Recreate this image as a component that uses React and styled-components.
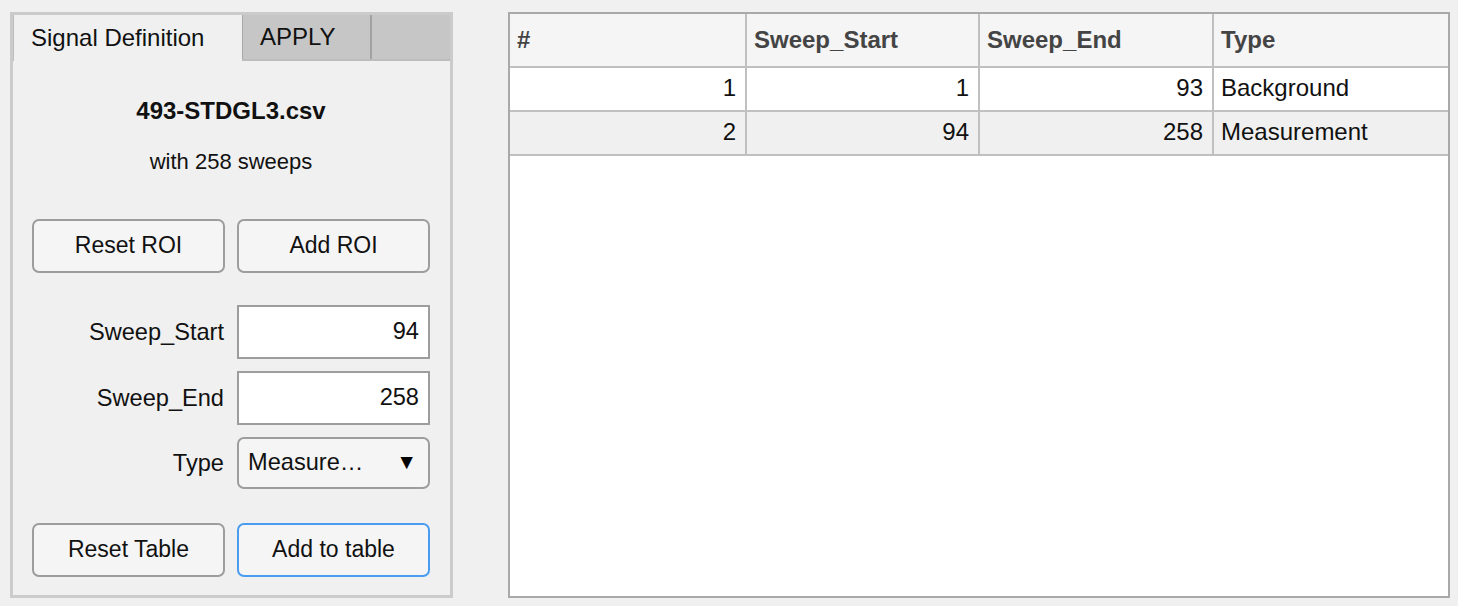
import React from "react";
import styled, { createGlobalStyle } from "styled-components";

const GlobalStyle = createGlobalStyle`
  html, body {
    margin: 0;
    padding: 0;
    background: #f0f0f0;
    font-family: "Liberation Sans", Arial, Helvetica, sans-serif;
    color: #111;
  }
  * {
    box-sizing: border-box;
  }
`;

const Page = styled.div`
  display: flex;
  align-items: flex-start;
  gap: 55px;
  padding: 12px 8px 8px 10px;
  height: 606px;
`;

const Panel = styled.div`
  width: 443px;
  height: 586px;
  border: 3px solid #cbcbcb;
  background: #f0f0f0;
  display: flex;
  flex-direction: column;
`;

const TabBar = styled.div`
  display: flex;
  height: 46px;
  background: #c6c6c6;
  border-bottom: 2px solid #bcbcbc;
`;

const Tab = styled.div`
  display: flex;
  align-items: center;
  width: ${({ width }) => width}px;
  padding: 0 0 1px 17px;
  font-size: 24px;
  color: #111;
  background: ${({ active }) => (active ? "#f0f0f0" : "#c6c6c6")};
  border-left: 1px solid ${({ active }) => (active ? "#bdbdbd" : "#a8a8a8")};
  border-right: ${({ active }) => (active ? "none" : "2px solid #a2a2a2")};
  margin-bottom: ${({ active }) => (active ? "-2px" : "0")};
`;

const Content = styled.div`
  display: flex;
  flex-direction: column;
  align-items: stretch;
  padding: 35px 0 0 19px;
`;

const FileName = styled.div`
  width: 398px;
  text-align: center;
  font-size: 24px;
  font-weight: bold;
  line-height: 30px;
`;

const Subtitle = styled.div`
  width: 398px;
  text-align: center;
  font-size: 22px;
  line-height: 30px;
  margin-top: 21px;
`;

const Grid = styled.div`
  display: grid;
  grid-template-columns: 193px 193px;
  column-gap: 12px;
  row-gap: 12px;
  width: 398px;
  margin-top: ${({ top }) => top}px;
  align-items: center;
`;

const Button = styled.button`
  width: 193px;
  height: 54px;
  font-family: inherit;
  font-size: 23px;
  color: #111;
  background: #f5f5f5;
  border: 2px solid ${({ primary }) => (primary ? "#4a9cf0" : "#9d9d9d")};
  border-radius: 7px;
  padding: 0 0 2px;
  margin: 0;
`;

const Label = styled.div`
  font-size: 23.6px;
  text-align: right;
  padding-right: 1px;
`;

const Field = styled.div`
  height: 54px;
  background: #fff;
  border: 2px solid #9d9d9d;
  font-size: 23.6px;
  display: flex;
  align-items: center;
  justify-content: flex-end;
  padding: 0 9px 2px;
`;

const Select = styled.div`
  height: 52px;
  background: #f5f5f5;
  border: 2px solid #9d9d9d;
  border-radius: 7px;
  font-size: 23.6px;
  display: flex;
  align-items: center;
  justify-content: space-between;
  padding: 0 11px 2px 9px;
`;

const Arrow = styled.span`
  font-size: 21px;
  color: #000;
`;

const TableBox = styled.div`
  width: 942px;
  height: 586px;
  border: 2px solid #a9a9a9;
  background: #fff;
`;

const Row = styled.div`
  display: grid;
  grid-template-columns: 235px 233px 234px 1fr;
  height: ${({ header }) => (header ? 54 : 44)}px;
  background: ${({ header, shade }) =>
    header ? "#f5f5f5" : shade ? "#f0f0f0" : "#fff"};
  border-bottom: 2px solid #c0c0c0;
`;

const Cell = styled.div`
  display: flex;
  align-items: center;
  justify-content: ${({ right }) => (right ? "flex-end" : "flex-start")};
  padding: ${({ right, header }) =>
    right ? "0 9px 2px 0" : header ? "0 0 0 7px" : "0 0 2px 7px"};
  font-size: 24px;
  font-weight: ${({ header }) => (header ? "bold" : "normal")};
  color: ${({ header }) => (header ? "#444" : "#111")};
  & + & {
    border-left: 2px solid #c0c0c0;
  }
`;

const rows = [
  { id: 1, start: 1, end: 93, type: "Background" },
  { id: 2, start: 94, end: 258, type: "Measurement" },
];

export default function App() {
  return (
    <>
      <GlobalStyle />
      <Page>
        <Panel>
          <TabBar>
            <Tab active width={229}>Signal Definition</Tab>
            <Tab width={130}>APPLY</Tab>
          </TabBar>
          <Content>
            <FileName>493-STDGL3.csv</FileName>
            <Subtitle>with 258 sweeps</Subtitle>
            <Grid top={42}>
              <Button>Reset ROI</Button>
              <Button>Add ROI</Button>
            </Grid>
            <Grid top={32}>
              <Label>Sweep_Start</Label>
              <Field>94</Field>
              <Label>Sweep_End</Label>
              <Field>258</Field>
              <Label>Type</Label>
              <Select>
                <span>Measure…</span>
                <Arrow>▼</Arrow>
              </Select>
            </Grid>
            <Grid top={34}>
              <Button>Reset Table</Button>
              <Button primary>Add to table</Button>
            </Grid>
          </Content>
        </Panel>
        <TableBox>
          <Row header>
            <Cell header>#</Cell>
            <Cell header>Sweep_Start</Cell>
            <Cell header>Sweep_End</Cell>
            <Cell header>Type</Cell>
          </Row>
          {rows.map((r, i) => (
            <Row key={r.id} shade={i % 2 === 1}>
              <Cell right>{r.id}</Cell>
              <Cell right>{r.start}</Cell>
              <Cell right>{r.end}</Cell>
              <Cell>{r.type}</Cell>
            </Row>
          ))}
        </TableBox>
      </Page>
    </>
  );
}
